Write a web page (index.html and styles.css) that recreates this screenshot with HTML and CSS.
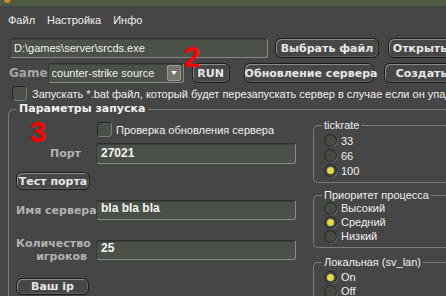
FILE: index.html
```html
<!DOCTYPE html>
<html>
<head>
<meta charset="utf-8">
<link rel="stylesheet" href="styles.css">
</head>
<body>
<div class="window">
  <div class="titlebar"><span class="app-icon"></span></div>
  <nav class="menubar"><span>Файл</span><span>Настройка</span><span>Инфо</span></nav>

  <div class="row row-path">
    <div class="field path">D:\games\server\srcds.exe</div>
    <button class="btn btn-choose">Выбрать файл</button>
    <button class="btn btn-open">Открыть</button>
  </div>

  <div class="row row-game">
    <span class="game-label">Game</span>
    <div class="field combo"><span class="combo-text">counter-strike source</span><span class="combo-arrow"></span></div>
    <button class="btn btn-run">RUN</button>
    <button class="btn btn-update">Обновление сервера</button>
    <button class="btn btn-create">Создать</button>
  </div>
  <span class="mark mark-2">2</span>

  <div class="check-row"><span class="check"></span><span>Запускать *.bat файл, который будет перезапускать сервер в случае если он упадет</span></div>

  <fieldset class="group main">
    <legend>Параметры запуска</legend>
    <div class="main-cols">
      <div class="left">
        <span class="mark mark-3">3</span>
        <div class="opt-row"><span class="check"></span><span>Проверка обновления сервера</span></div>
        <div class="form-row row-port">
          <span class="lbl lbl-port">Порт</span>
          <div class="field value h21">27021</div>
        </div>
        <button class="btn btn-small btn-test">Тест порта</button>
        <div class="form-row row-name">
          <span class="lbl">Имя сервера</span>
          <div class="field value">bla bla bla</div>
        </div>
        <div class="form-row row-players">
          <span class="lbl lbl-players">Количество<br>игроков</span>
          <div class="field value">25</div>
        </div>
        <button class="btn btn-small btn-ip">Ваш ip</button>
      </div>
      <div class="right">
        <fieldset class="group sub sub-tick">
          <legend>tickrate</legend>
          <div class="radio-row r15"><span class="radio"></span>33</div>
          <div class="radio-row r15"><span class="radio"></span>66</div>
          <div class="radio-row r15"><span class="radio on"></span>100</div>
        </fieldset>
        <fieldset class="group sub sub-prio">
          <legend>Приоритет процесса</legend>
          <div class="radio-row"><span class="radio"></span>Высокий</div>
          <div class="radio-row"><span class="radio on"></span>Средний</div>
          <div class="radio-row"><span class="radio"></span>Низкий</div>
        </fieldset>
        <fieldset class="group sub sub-lan">
          <legend>Локальная (sv_lan)</legend>
          <div class="radio-row"><span class="radio on"></span>On</div>
          <div class="radio-row"><span class="radio"></span>Off</div>
        </fieldset>
      </div>
    </div>
  </fieldset>
</div>
</body>
</html>
```
FILE: styles.css
```css
html, body {
  margin: 0;
  background: #464646;
}
body {
  font: 11px "Liberation Sans", Arial, sans-serif;
  color: #f0f0f0;
}
.window {
  width: 446px;
  height: 296px;
  overflow: hidden;
  position: relative;
  background: #464646;
}
.titlebar {
  height: 6px;
  background: #4d5a44;
  position: relative;
}
.app-icon {
  position: absolute;
  left: 4px;
  top: -4px;
  width: 7px;
  height: 7px;
  border-radius: 50%;
  background: #c98a34;
}
.menubar {
  display: flex;
  gap: 12px;
  padding-left: 8px;
  height: 29px;
  line-height: 29px;
}
.row {
  display: flex;
  align-items: center;
  white-space: nowrap;
  height: 20px;
}
.field {
  flex: none;
  box-sizing: border-box;
  background: #4b5148;
  border: 1px solid;
  border-color: #303030 #8a8a8a #8a8a8a #3a3a3a;
  box-shadow: inset 0 1px 0 #3c3f3b;
  border-radius: 3px;
  overflow: hidden;
  white-space: nowrap;
}
.row-path {
  margin-top: 3px;
  padding-left: 10px;
}
.path {
  width: 258px;
  height: 20px;
  line-height: 18px;
  padding-left: 3px;
}
.btn {
  flex: none;
  box-sizing: border-box;
  height: 20px;
  padding: 0;
  font: bold 11px "DejaVu Sans", Verdana, sans-serif;
  color: #e6e6e6;
  background: #474747;
  border: 1px solid #1c1c1c;
  border-radius: 6px;
  box-shadow: inset 1px 1px 0 #8c8c8c, inset -1px -1px 0 #5e5e5e;
  white-space: nowrap;
}
.btn-choose { margin-left: 7px; width: 104px; }
.btn-open { margin-left: 9px; width: 64px; }
.row-game {
  margin-top: 5px;
  padding-left: 9px;
}
.game-label {
  font: bold 12px "DejaVu Sans", Verdana, sans-serif;
  color: #a4a4a4;
  width: 43px;
}
.combo {
  width: 136px;
  height: 20px;
  display: flex;
  align-items: center;
  padding-left: 3px;
}
.combo-text {
  flex: 1;
  overflow: hidden;
}
.combo-arrow {
  flex: none;
  width: 14px;
  height: 16px;
  margin-right: 2px;
  box-sizing: border-box;
  background: #76766e;
  border: 1px solid #9a9a92;
  border-radius: 2px;
  position: relative;
}
.combo-arrow::after {
  content: "";
  position: absolute;
  left: 3px;
  top: 5px;
  border-left: 3.5px solid transparent;
  border-right: 3.5px solid transparent;
  border-top: 4px solid #f2f2f2;
}
.btn-run { margin-left: 8px; width: 38px; }
.btn-update { margin-left: 14px; width: 130px; }
.btn-create { margin-left: 10px; width: 76px; }

.mark {
  position: absolute;
  font: bold 29px "Liberation Sans", Arial, sans-serif;
  line-height: 1;
  color: #ff0000;
}
.mark-2 { left: 184px; top: 43px; }
.mark-3 { left: 21px; top: 2px; }

.check-row {
  margin-top: 3px;
  padding-left: 12px;
  height: 15px;
  display: flex;
  align-items: center;
  gap: 5px;
  white-space: nowrap;
}
.check {
  flex: none;
  width: 15px;
  height: 15px;
  box-sizing: border-box;
  border-radius: 4px;
  background: #4b5148;
  border: 1px solid;
  border-color: #262626 #7a7a7a #7a7a7a #262626;
}

.group {
  min-width: 0;
  padding: 0;
  border: 1px solid #7c7c7c;
  border-right: none;
}
.group legend {
  padding: 0 3px;
}
.main {
  margin: 1px 0 0 8px;
  width: 520px;
  height: 320px;
  border-bottom: none;
  border-radius: 6px 0 0 0;
}
.main > legend {
  margin-left: 7px;
  font: bold 11px "DejaVu Sans", Verdana, sans-serif;
  line-height: 14px;
  color: #f2f2f2;
}
.main-cols {
  display: flex;
}
.left {
  position: relative;
  width: 291px;
  box-sizing: border-box;
  padding-left: 7px;
  display: flex;
  flex-direction: column;
  align-items: flex-start;
}
.opt-row {
  margin-top: 6px;
  margin-left: 81px;
  height: 15px;
  display: flex;
  align-items: center;
  gap: 4px;
  white-space: nowrap;
}
.form-row {
  display: flex;
  align-items: center;
}
.lbl {
  width: 75px;
  box-sizing: border-box;
  text-align: right;
  font: bold 11px "DejaVu Sans", Verdana, sans-serif;
  color: #b2b2b2;
  white-space: nowrap;
}
.lbl-port { padding-right: 10px; }
.lbl-players { padding-right: 4px; line-height: 13px; }
.value {
  margin-left: 5px;
  width: 200px;
  height: 20px;
  line-height: 18px;
  padding-left: 4px;
  font: bold 12px "Liberation Sans", Arial, sans-serif;
  color: #f4f4f4;
}
.value.h21 { height: 21px; line-height: 19px; }
.row-port { margin-top: 6px; }
.btn-small { width: 74px; height: 18px; }
.btn-test { margin-top: 8px; }
.row-name { margin-top: 10px; }
.row-players { margin-top: 17px; }
.btn-ip { margin-top: 15px; height: 17px; width: 73px; }

.right {
  margin-left: 13px;
  width: 160px;
  flex: none;
}
.sub {
  margin: 0;
  border-radius: 5px 0 0 5px;
  padding: 0 0 4px;
}
.sub > legend {
  margin-left: 8px;
  padding: 0 2px;
  line-height: 12px;
  color: #f0f0f0;
}
.sub-tick { margin-top: 3px; padding-top: 2px; }
.sub-prio { margin-top: 6px; }
.sub-lan { margin-top: 8px; padding-top: 2px; }
.radio-row {
  height: 14px;
  display: flex;
  align-items: center;
  gap: 4px;
  padding-left: 10px;
  white-space: nowrap;
}
.radio-row.r15 { height: 15px; }
.radio {
  flex: none;
  width: 13px;
  height: 13px;
  box-sizing: border-box;
  border-radius: 50%;
  background: #454b43;
  border: 1px solid #262626;
  box-shadow: 1px 1px 0 -0.5px #6c6c6c;
  position: relative;
}
.radio.on::after {
  content: "";
  position: absolute;
  left: 2px;
  top: 2px;
  width: 7px;
  height: 7px;
  border-radius: 50%;
  background: #e6d84c;
}
```
